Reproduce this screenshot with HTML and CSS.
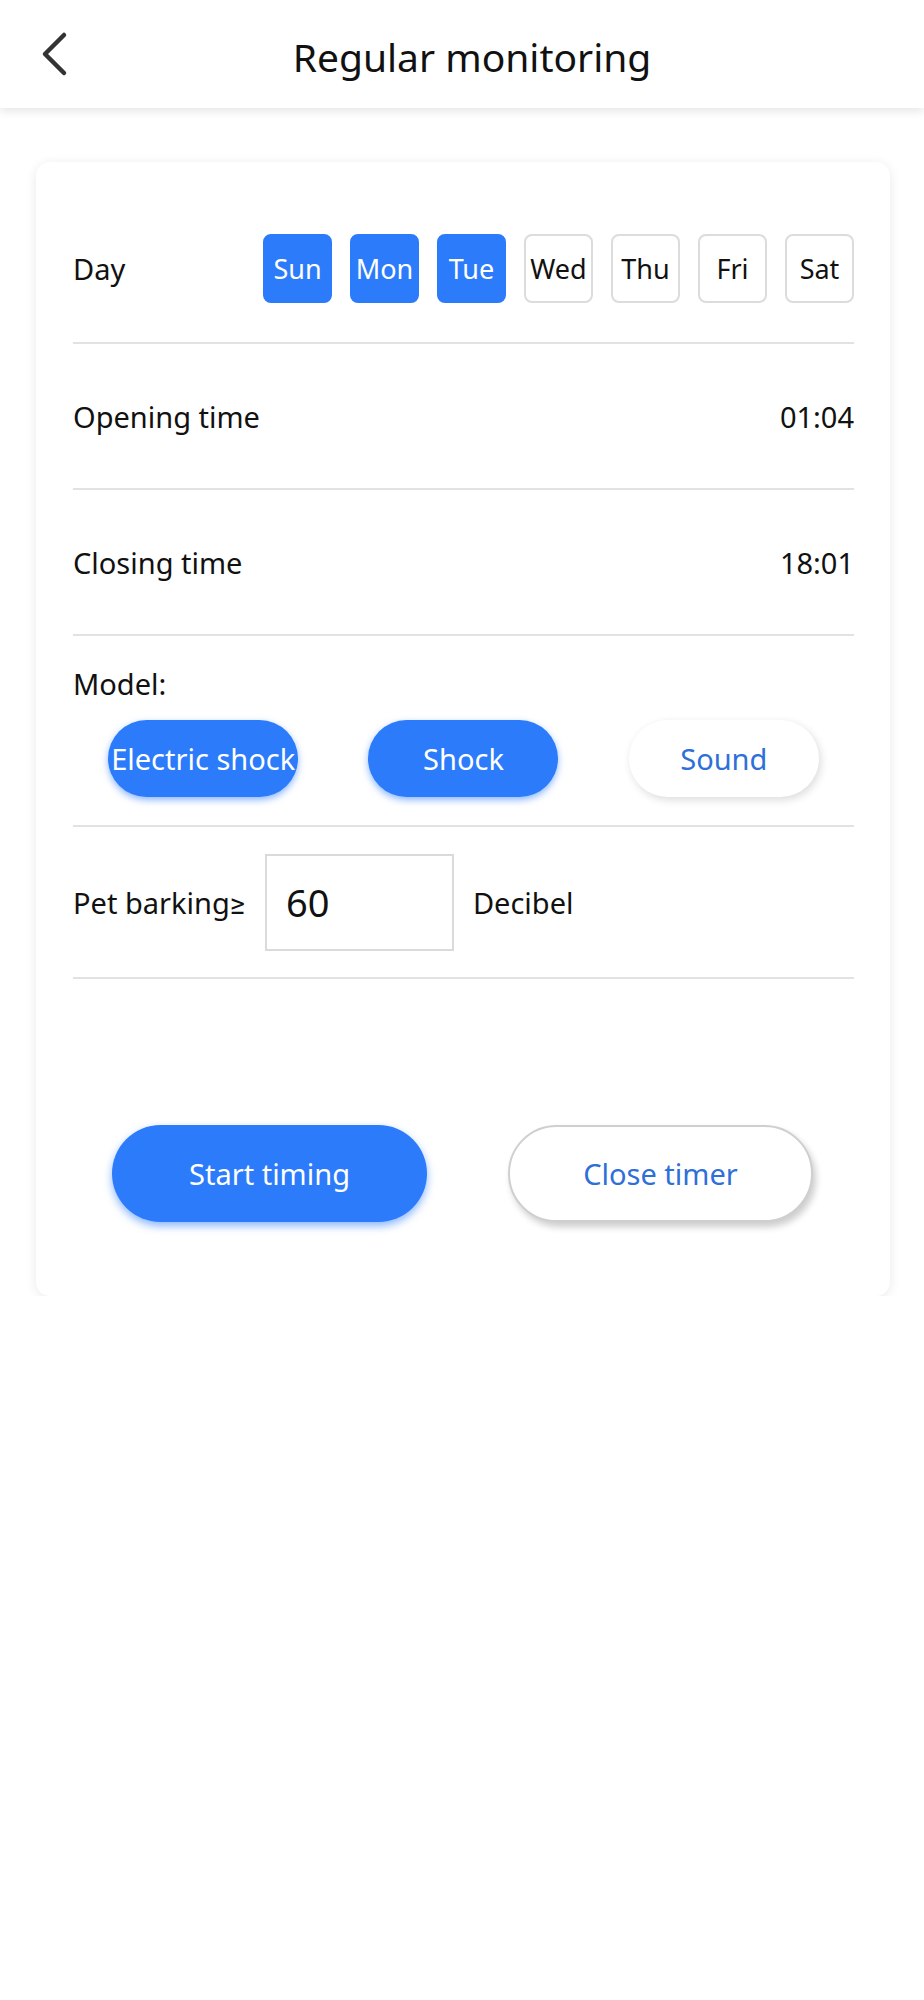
FILE: index.html
```html
<!DOCTYPE html>
<html lang="en">

<head>
    <title>Regular monitoring</title>
    <meta name="viewport" content="width=device-width, initial-scale=1.0">
    <link rel="stylesheet" href="styles.css">
</head>

<body>
    <header class="topbar">
        <a class="back" href="#">
            <svg width="30" height="46" viewBox="0 0 30 46">
                <path d="M24 4 L5 23 L24 42" fill="none" stroke="#333" stroke-width="4.5" stroke-linecap="round" stroke-linejoin="round" />
            </svg>
        </a>
        <h1 class="title">Regular monitoring</h1>
    </header>

    <div class="card">
        <div class="row day-row">
            <span class="label">Day</span>
            <div class="days">
                <span class="day on">Sun</span>
                <span class="day on">Mon</span>
                <span class="day on">Tue</span>
                <span class="day">Wed</span>
                <span class="day">Thu</span>
                <span class="day">Fri</span>
                <span class="day">Sat</span>
            </div>
        </div>

        <div class="row time-row">
            <span class="label">Opening time</span>
            <span class="value">01:04</span>
        </div>

        <div class="row time-row">
            <span class="label">Closing time</span>
            <span class="value">18:01</span>
        </div>

        <div class="row model-row">
            <span class="label">Model:</span>
            <div class="modes">
                <span class="mode on">Electric shock</span>
                <span class="mode on">Shock</span>
                <span class="mode">Sound</span>
            </div>
        </div>

        <div class="row bark-row">
            <span class="label">Pet barking≥</span>
            <input type="text" class="db-input" value="60">
            <span class="label">Decibel</span>
        </div>

        <div class="actions">
            <button class="btn start">Start timing</button>
            <button class="btn stop">Close timer</button>
        </div>
    </div>
</body>
</html>
```

FILE: styles.css
```css
body {
    margin: 0;
    background-color: #fff;
    font-family: "Noto Sans", Roboto, sans-serif;
    color: #111;
}
.topbar {
    height: 108px;
    display: flex;
    align-items: center;
    background-color: #fff;
    box-shadow: 0 4px 8px rgba(0, 0, 0, 0.09);
    position: relative;
}
.back {
    display: block;
    margin-left: 40px;
    width: 30px;
    height: 46px;
}
.title {
    flex: 1;
    margin: 4px 70px 0 0;
    padding-left: 20px;
    text-align: center;
    font-size: 39px;
    font-weight: 400;
    color: #111;
}
.card {
    margin: 54px 34px 0 36px;
    padding: 0 36px 74px 37px;
    background-color: #fff;
    border-radius: 14px;
    box-shadow: 0 2px 12px rgba(0, 0, 0, 0.09);
}
.row {
    display: flex;
    align-items: center;
    border-bottom: 2px solid #e2e2e2;
}
.label {
    font-size: 29px;
}
.day-row {
    justify-content: space-between;
    padding: 72px 0 39px 0;
}
.days {
    display: flex;
    gap: 18px;
}
.day {
    width: 65px;
    height: 65px;
    display: flex;
    align-items: center;
    justify-content: center;
    border: 2px solid #dcdcdc;
    border-radius: 8px;
    font-size: 27px;
    color: #111;
}
.day.on {
    background-color: #2b7bfb;
    border-color: #2b7bfb;
    color: #fff;
}
.time-row {
    height: 144px;
    justify-content: space-between;
}
.value {
    font-size: 29px;
}
.model-row {
    flex-direction: column;
    align-items: stretch;
    padding: 28px 0 28px 0;
}
.modes {
    display: flex;
    justify-content: space-around;
    margin-top: 17px;
}
.mode {
    width: 190px;
    height: 77px;
    display: flex;
    align-items: center;
    justify-content: center;
    border-radius: 39px;
    white-space: nowrap;
    font-size: 29px;
    color: #2e6fd9;
    background-color: #fff;
    box-shadow: 2px 3px 8px rgba(0, 0, 0, 0.14);
}
.mode.on {
    background-color: #2b7bfb;
    color: #fff;
    box-shadow: 0 3px 7px rgba(43, 123, 251, 0.55);
}
.bark-row {
    height: 150px;
}
.db-input {
    width: 189px;
    height: 97px;
    margin: 0 19px 0 20px;
    padding: 0 0 0 19px;
    box-sizing: border-box;
    border: 2px solid #dadada;
    font-family: "Noto Sans", Roboto, sans-serif;
    font-size: 38px;
    color: #111;
    outline: none;
}
.actions {
    display: flex;
    justify-content: space-between;
    padding: 0 41px 0 39px;
    margin-top: 146px;
}
.btn {
    height: 97px;
    border-radius: 49px;
    font-family: "Noto Sans", Roboto, sans-serif;
    font-size: 29px;
    cursor: pointer;
}
.start {
    width: 315px;
    border: none;
    background-color: #2b7bfb;
    color: #fff;
    box-shadow: 0 4px 8px rgba(43, 123, 251, 0.55);
}
.stop {
    width: 305px;
    border: 2px solid #cfcfcf;
    background-color: #fff;
    color: #2e6fd9;
    box-shadow: 3px 5px 7px rgba(0, 0, 0, 0.2);
}
```
